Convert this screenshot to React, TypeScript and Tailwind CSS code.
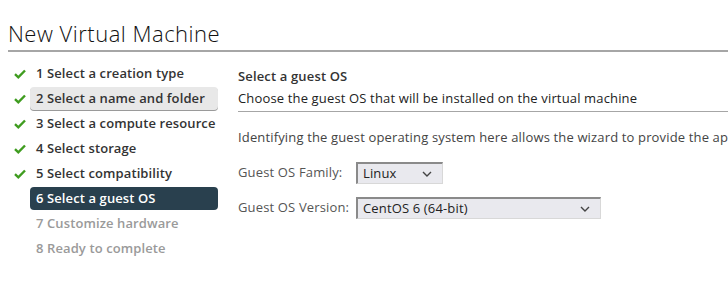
import React from 'react';

const steps = [
  { n: 1, label: 'Select a creation type', state: 'done' },
  { n: 2, label: 'Select a name and folder', state: 'hover' },
  { n: 3, label: 'Select a compute resource', state: 'done' },
  { n: 4, label: 'Select storage', state: 'done' },
  { n: 5, label: 'Select compatibility', state: 'done' },
  { n: 6, label: 'Select a guest OS', state: 'active' },
  { n: 7, label: 'Customize hardware', state: 'todo' },
  { n: 8, label: 'Ready to complete', state: 'todo' },
];

function Check() {
  return (
    <svg width="12" height="10" viewBox="0 0 12 10" aria-hidden="true">
      <path d="M1 5.2 L4.3 8.3 L11 1.5" fill="none" stroke="#3f9c1f" strokeWidth="2.4" />
    </svg>
  );
}

function Chevron() {
  return (
    <svg width="10" height="6" viewBox="0 0 10 6" aria-hidden="true">
      <path d="M1 1 L5 5 L9 1" fill="none" stroke="#444" strokeWidth="1.4" />
    </svg>
  );
}

function Select({ value, width }: { value: string; width: string }) {
  return (
    <div
      className={`${width} h-[22px] flex items-center justify-between pl-[5px] pr-[10px] bg-[#e9e9ee] border-t-2 border-l-2 border-[#8a8a8a] border-r border-b border-r-[#d8d8d8] border-b-[#d8d8d8] text-[13px] text-[#222]`}
    >
      <span>{value}</span>
      <Chevron />
    </div>
  );
}

export default function App() {
  return (
    <div className="w-[728px] h-[296px] overflow-hidden bg-white font-['Open_Sans',sans-serif] text-[#333] tracking-[0.15px]">
      <div className="pl-2 pt-[18px]">
        <h1 className="text-[22px] font-light leading-[30px] text-[#111] tracking-[0.5px]">New Virtual Machine</h1>
        <div className="mt-[2px] h-[2px] bg-[#a6a6a6]" />
      </div>

      <div className="flex pt-[10px]">
        {/* Steps */}
        <nav className="w-[218px] shrink-0 pl-[14px] flex flex-col gap-[2px] tracking-[0.1px] whitespace-nowrap">
          {steps.map((s) => (
            <div key={s.n} className="flex items-center h-[23px]">
              <span className="w-4 shrink-0 flex justify-start">{s.state === 'done' || s.state === 'hover' ? <Check /> : null}</span>
              <div
                className={
                  s.state === 'active'
                    ? 'flex-1 h-[23px] flex items-center pl-[6px] rounded-[4px] bg-[#29404e] text-white font-semibold text-[13px]'
                    : s.state === 'hover'
                    ? 'flex-1 h-[23px] flex items-center pl-[6px] rounded-[4px] bg-[#e8e8e8] shadow-[0_1px_0_#9a9a9a] text-[#333] font-semibold text-[13px]'
                    : s.state === 'todo'
                    ? 'flex-1 h-[23px] flex items-center pl-[6px] text-[#9a9a9a] font-semibold text-[13px]'
                    : 'flex-1 h-[23px] flex items-center pl-[6px] text-[#333] font-semibold text-[13px]'
                }
              >
                {s.n} {s.label}
              </div>
            </div>
          ))}
        </nav>

        {/* Content */}
        <main className="flex-1 min-w-0 pl-[20px] pt-[4px] text-[13px] whitespace-nowrap overflow-hidden">
          <div className="font-semibold leading-[20px] text-[#333]">Select a guest OS</div>
          <div className="mt-[2px] leading-[20px] text-[#222]">Choose the guest OS that will be installed on the virtual machine</div>
          <div className="mt-[3px] h-px bg-[#a6a6a6]" />
          <p className="mt-[15px] leading-[20px] text-[#444]">
            Identifying the guest operating system here allows the wizard to provide the appropriate defaults for the operating system installation.
          </p>
          <div className="mt-[15px] flex flex-col gap-[13px]">
            <div className="flex items-center">
              <span className="w-[118px] text-[#555]">Guest OS Family:</span>
              <Select value="Linux" width="w-[87px]" />
            </div>
            <div className="flex items-center">
              <span className="w-[118px] text-[#555]">Guest OS Version:</span>
              <Select value="CentOS 6 (64-bit)" width="w-[245px]" />
            </div>
          </div>
        </main>
      </div>
    </div>
  );
}
